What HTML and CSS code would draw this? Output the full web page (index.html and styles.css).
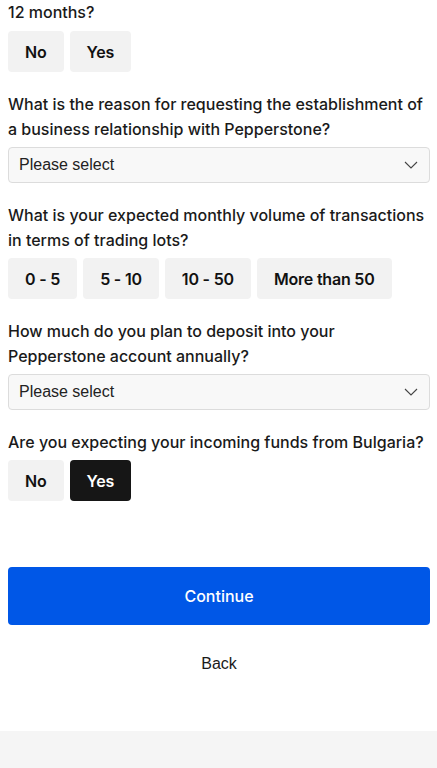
FILE: index.html
```html
<!DOCTYPE html>
<html lang="en">
<head>
<meta charset="utf-8">
<title>Questionnaire</title>
<link rel="stylesheet" href="styles.css">
</head>
<body>
<main class="form">
  <div class="field">
    <p class="label">12 months?</p>
    <div class="choices">
      <button class="choice">No</button>
      <button class="choice">Yes</button>
    </div>
  </div>
  <div class="field">
    <p class="label">What is the reason for requesting the establishment of a business relationship with Pepperstone?</p>
    <div class="select">
      <span>Please select</span>
      <svg class="chev" width="14" height="8" viewBox="0 0 14 8"><path d="M1 1l6 6 6-6" fill="none" stroke="#444" stroke-width="1.1"/></svg>
    </div>
  </div>
  <div class="field">
    <p class="label">What is your expected monthly volume of transactions in terms of trading lots?</p>
    <div class="choices">
      <button class="choice">0 - 5</button>
      <button class="choice">5 - 10</button>
      <button class="choice">10 - 50</button>
      <button class="choice">More than 50</button>
    </div>
  </div>
  <div class="field">
    <p class="label">How much do you plan to deposit into your Pepperstone account annually?</p>
    <div class="select">
      <span>Please select</span>
      <svg class="chev" width="14" height="8" viewBox="0 0 14 8"><path d="M1 1l6 6 6-6" fill="none" stroke="#444" stroke-width="1.1"/></svg>
    </div>
  </div>
  <div class="field">
    <p class="label">Are you expecting your incoming funds from Bulgaria?</p>
    <div class="choices">
      <button class="choice">No</button>
      <button class="choice active">Yes</button>
    </div>
  </div>
  <div class="actions">
    <button class="continue">Continue</button>
    <button class="back">Back</button>
  </div>
</main>
<footer class="footer"></footer>
</body>
</html>
```
FILE: styles.css
```css
* { box-sizing: border-box; }
html, body { margin: 0; padding: 0; background: #fff; }
body {
  font-family: Inter, "Noto Sans", sans-serif;
  color: #1a1a1a;
  width: 437px;
  height: 768px;
  display: flex;
  flex-direction: column;
}
.form {
  padding: 0 7px 0 8px;
  flex: 1;
}
.field { margin-bottom: 20px; }
.label {
  margin: 0 0 5px;
  font-size: 16px;
  line-height: 25px;
  font-weight: 500;
  letter-spacing: 0;
  color: #1a1a1a;
}
.field:first-child .label { margin-bottom: 6px; }
.choices { display: flex; gap: 6px; }
.choice {
  height: 41px;
  padding: 0 17px;
  border: none;
  border-radius: 4px;
  background: #f2f2f2;
  font-family: Inter, sans-serif;
  font-size: 16px;
  font-weight: 600;
  letter-spacing: -0.2px;
  color: #111;
}
.choice.active { background: #161616; color: #fff; }
.select {
  height: 36px;
  border: 1px solid #dcdcdc;
  border-radius: 4px;
  background: #f8f8f8;
  display: flex;
  align-items: center;
  justify-content: space-between;
  padding: 0 11px 0 10px;
  font-family: "Liberation Sans", Arial, sans-serif;
  font-size: 16px;
  color: #222;
}
.chev { display: block; }
.actions {
  margin-top: 66px;
  display: flex;
  flex-direction: column;
}
.continue {
  height: 58px;
  border: none;
  border-radius: 4px;
  background: #0057e7;
  color: #fff;
  font-family: Inter, sans-serif;
  font-size: 16px;
  font-weight: 500;
}
.back {
  margin-top: 20px;
  height: 38px;
  border: none;
  background: transparent;
  font-family: "Liberation Sans", Arial, sans-serif;
  font-size: 16px;
  color: #1a1a1a;
}
.footer {
  height: 37px;
  background: #f5f5f5;
  flex: none;
}
```
